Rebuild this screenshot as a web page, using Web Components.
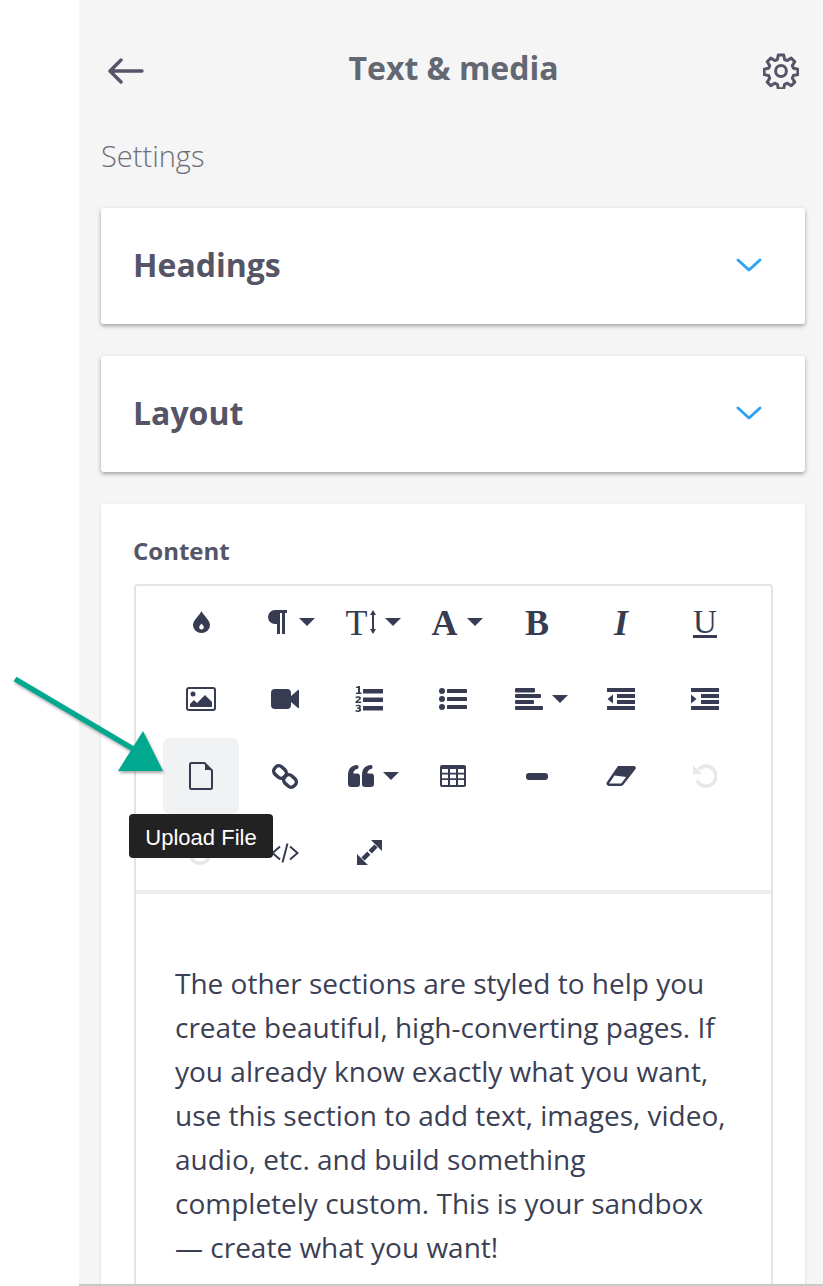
<!DOCTYPE html>
<html lang="en"><head><meta charset="utf-8"><title>Text &amp; media</title>
<style>
html,body{margin:0;padding:0;background:#fff;height:1286px;overflow:hidden}
body{font-family:"Open Sans",sans-serif}
</style></head><body>
<template id="t-panel"><style>
:host{display:flex;flex-direction:column;margin-left:79px;height:1286px;background:#f5f5f5;position:relative}
.scroll{flex:1;min-height:0;overflow:hidden;padding:0 18px 0 22px}
.foot{height:2px;background:#c9c9c9;flex:none}
</style><div class="scroll"><slot></slot></div><div class="foot"></div></template>

<template id="t-header"><style>
:host{display:flex;align-items:center;justify-content:space-between;height:48px;padding:44px 6px 0 7px;color:#636772}
h1{margin:0;font:700 32px/48px "Open Sans",sans-serif;color:#636772}
::slotted(svg){display:block}
::slotted(svg[slot=back]){margin-top:6px}
::slotted(svg[slot=gear]){margin-top:6px}
</style><slot name="back"></slot><h1><slot></slot></h1><slot name="gear"></slot></template>

<template id="t-section-label"><style>
:host{display:block;margin:46px 0 34px;font:300 29px/36px "Open Sans",sans-serif;color:#6b6e78}
</style><slot></slot></template>

<template id="t-accordion"><style>
:host{display:flex;align-items:center;justify-content:space-between;height:116px;box-sizing:border-box;padding:0 42px 3px 32px;margin-bottom:32px;background:#fff;border-radius:3px;box-shadow:0 2px 4px rgba(0,0,0,.35)}
.t{font:700 32px/40px "Open Sans",sans-serif;color:#555567}
svg{display:block}
</style><span class="t"><slot></slot></span>
<svg width="28" height="16" viewBox="0 0 28 16" fill="none" stroke="#2ea3f2" stroke-width="3" stroke-linecap="round" stroke-linejoin="round" style="margin-top:1px"><path d="M3 3l11 10L25 3"/></svg></template>

<template id="t-content-card"><style>
:host{display:block;background:#fff;border-radius:3px;box-shadow:0 1px 3px rgba(0,0,0,.12);padding:32px 32px 0 33px;height:900px;box-sizing:border-box}
.l{font:700 24px/30px "Open Sans",sans-serif;color:#555567;margin:0 0 18px -1px;display:block}
</style><span class="l"><slot name="label"></slot></span><slot></slot></template>

<template id="t-editor"><style>
:host{display:block;border:2px solid #e4e4e4;border-radius:4px;background:#fff;height:860px}
.bar{margin-top:-2px;height:306px;border-bottom:4px solid #ededed;display:grid;grid-template-columns:repeat(7,76px);grid-auto-rows:76px;column-gap:8px;row-gap:1px;padding-left:27px;align-content:start;box-sizing:content-box}
.body{padding:67px 40px 0 39px;font:400 28px/44px "Open Sans",sans-serif;color:#3b3f55}
</style><div class="bar"><slot name="tools"></slot></div><div class="body"><slot></slot></div></template>

<template id="t-tool"><style>
:host{display:flex;align-items:center;justify-content:center;position:relative;width:76px;height:76px;border-radius:7px;color:#383c52}
:host([active]){background:#f1f2f4}
:host([off]){color:#e8e8e8}
:host([drop]){padding-left:8px;box-sizing:border-box}
.w{display:flex;align-items:center;gap:9px}
.g{display:none}
:host([serif]) .g{display:block;font:700 36px/36px "Liberation Serif",serif;padding-top:2px}
.c{display:none}
:host([drop]) .c{display:block}
::slotted(svg){display:block}
</style><div class="w"><span class="g"><slot name="glyph"></slot></span><slot></slot><svg class="c" width="16" height="8" viewBox="0 0 16 8"><path fill="currentColor" d="M0 0h16L8 8z"/></svg></div><slot name="over"></slot></template>

<template id="t-tooltip"><style>
:host{display:block;position:absolute;z-index:3;left:50%;top:100%;transform:translateX(-50%);width:144px;height:44px;background:#222;border-radius:4px;color:#fff;font:400 22px/47px "Liberation Sans",sans-serif;text-align:center;white-space:nowrap}
</style><slot></slot></template>

<template id="t-arrow"><style>
:host{display:block;position:absolute;left:-79px;top:670px;width:180px;height:110px;z-index:4;pointer-events:none}
svg{display:block;overflow:visible;filter:drop-shadow(1px 2px 1.5px rgba(0,0,0,.35))}
</style><svg width="180" height="110" viewBox="0 0 180 110"><path d="M15 9L135 80" stroke="#00a88f" stroke-width="5.500" fill="none"/><path fill="#00a88f" d="M163 101L143 61 118 101z"/></svg></template>

<x-panel>
 <x-header>Text &amp; media
  <svg slot="back" width="36" height="26" viewBox="0 0 36 26" fill="none" stroke="#555567" stroke-width="3.4" stroke-linecap="round" stroke-linejoin="round"><path d="M34 13H3M13 2L2 13l11 11"/></svg>
  <svg slot="gear" width="36" height="36" viewBox="0 0 36 36" fill="none" stroke="#555567" stroke-width="3" stroke-linejoin="round"><path d="M15.300 2h5.400l.9 4.500 2.700 1.100 3.900-2.500 3.600 3.600-2.500 3.900 1.100 2.700 4.500.9v5.400l-4.500.9-1.100 2.700 2.500 3.900-3.600 3.600-3.900-2.500-2.700 1.100-.9 4.500h-5.400l-.9-4.500-2.700-1.100-3.900 2.500-3.600-3.600 2.500-3.900-1.100-2.700-4.500-.9v-5.400l4.500-.9 1.100-2.700-2.500-3.900 3.600-3.600 3.900 2.500 2.700-1.100z"/><circle cx="18" cy="18" r="5.400"/></svg>
 </x-header>
 <x-section-label>Settings</x-section-label>
 <x-accordion>Headings</x-accordion>
 <x-accordion>Layout</x-accordion>
 <x-content-card>
  <span slot="label">Content</span>
  <x-editor>
   <x-tool slot="tools"><svg width="17" height="22" viewBox="0 0 17 22"><path fill="currentColor" fill-rule="evenodd" d="M8.500 0C10 4 17 9 17 14a8.500 8 0 0 1-17 0C0 9 7 4 8.500 0zM8.500 12.500c-1 1.500-2.300 2.500-2.300 3.700a2.300 2.300 0 0 0 4.600 0c0-1.200-1.300-2.200-2.300-3.700z"/></svg></x-tool>
   <x-tool slot="tools" drop style="padding-left:12px"><svg width="20" height="24" viewBox="0 0 20 24" style="margin-right:3px"><path fill="currentColor" d="M8 0h12v3h-2v21h-3V3h-2v21h-3V14H8A7 7 0 0 1 8 0z"/></svg></x-tool>
   <x-tool slot="tools" drop serif><span slot="glyph" style="font-weight:400">T</span><svg width="6" height="24" viewBox="0 0 6 24" style="margin-left:-7px"><path fill="currentColor" d="M3 0l3 5H4v14h2l-3 5-3-5h2V5H0z"/></svg></x-tool>
   <x-tool slot="tools" drop serif><span slot="glyph">A</span></x-tool>
   <x-tool slot="tools" serif><span slot="glyph">B</span></x-tool>
   <x-tool slot="tools" serif><span slot="glyph" style="font-style:italic">I</span></x-tool>
   <x-tool slot="tools" serif><span slot="glyph" style="font:400 33px/26px 'Liberation Serif',serif;display:block;border-bottom:3px solid currentColor;width:24px;text-align:center">U</span></x-tool>

   <x-tool slot="tools"><svg width="30" height="24" viewBox="0 0 30 24"><rect x="1" y="1" width="28" height="22" rx="2" fill="none" stroke="currentColor" stroke-width="2"/><circle cx="7" cy="7" r="2.500" fill="currentColor"/><path fill="currentColor" d="M4 20v-3l4-4 3 3 8-8 7 7v5z"/></svg></x-tool>
   <x-tool slot="tools"><svg width="28" height="20" viewBox="0 0 28 20"><path fill="currentColor" d="M4 0h12a4 4 0 0 1 4 4v3l7-6q1-1 1 1v16q0 2-1 1l-7-6v3a4 4 0 0 1-4 4H4a4 4 0 0 1-4-4V4a4 4 0 0 1 4-4z"/></svg></x-tool>
   <x-tool slot="tools"><svg width="28" height="27" viewBox="0 0 28 27"><path fill="currentColor" d="M8 3h20v4.500H8zM8 11.500h20V16H8zM8 20h20v4.500H8zM1 1l2.500-1H5v6.500h1.500V8H1V6.500h2V2H1zM.5 11c1-1 5.500-1.300 5.500 1.300 0 1.500-2.500 2.300-3.200 3.200h3.400V17H.4v-1.300c.5-1.200 3.600-2.300 3.600-3.300 0-.9-2-.5-3 .1zM.8 19.300c1.500-.8 5.200-.9 5.200 1.200 0 .8-.5 1.200-1.100 1.500.8.300 1.300.8 1.300 1.700 0 2.600-4.300 2.700-6 1.500l.6-1.200c1 .6 3.400.8 3.400-.4 0-.8-1.200-.9-2.200-.8v-1.200c.9 0 2-.1 2-.9 0-1-2-.7-3.200-.2z"/></svg></x-tool>
   <x-tool slot="tools"><svg width="28" height="22" viewBox="0 0 28 22"><g fill="currentColor"><circle cx="3" cy="3" r="3"/><circle cx="3" cy="11" r="3"/><circle cx="3" cy="19" r="3"/><rect x="8" y="1" width="20" height="4" rx=".5"/><rect x="8" y="9" width="20" height="4" rx=".5"/><rect x="8" y="17" width="20" height="4" rx=".5"/></g></svg></x-tool>
   <x-tool slot="tools" drop><svg width="28" height="22" viewBox="0 0 28 22"><g fill="currentColor"><rect width="20" height="4.500" rx="1"/><rect y="6" width="26" height="4" rx="1"/><rect y="12" width="19" height="4" rx="1"/><rect y="18" width="28" height="4" rx="1"/></g></svg></x-tool>
   <x-tool slot="tools"><svg width="28" height="22" viewBox="0 0 28 22"><path fill="currentColor" d="M0 0h28v4H0zM10 6h18v4H10zM10 12h18v4H10zM0 18h28v4H0zM6 6.500v9L.5 11z"/></svg></x-tool>
   <x-tool slot="tools"><svg width="28" height="22" viewBox="0 0 28 22"><path fill="currentColor" d="M0 0h28v4H0zM10 6h18v4H10zM10 12h18v4H10zM0 18h28v4H0zM0 6.500v9L5.500 11z"/></svg></x-tool>

   <x-tool slot="tools" active><svg width="24" height="28" viewBox="0 0 24 28" fill="none" stroke="currentColor" stroke-width="2" stroke-linejoin="round"><path d="M15.500 1H2.500A1.500 1.500 0 0 0 1 2.500v23A1.500 1.500 0 0 0 2.500 27h19a1.500 1.500 0 0 0 1.500-1.500V8.500z"/><path fill="currentColor" stroke="none" d="M16 1l7 7h-7z"/></svg><x-tooltip slot="over">Upload File</x-tooltip></x-tool>
   <x-tool slot="tools"><svg width="26" height="25" viewBox="0 0 26 25" fill="none" stroke="currentColor" stroke-width="3.400"><rect x="1.500" y="3" width="13" height="10" rx="4.500" transform="rotate(42 8 8)"/><rect x="11.500" y="12" width="13" height="10" rx="4.500" transform="rotate(42 18 17)"/></svg></x-tool>
   <x-tool slot="tools" drop><svg width="26" height="22" viewBox="0 0 26 22"><path fill="currentColor" d="M3 22a3 3 0 0 1-3-3V10C0 4 3 .5 9 0c2 0 2 4 0 4C7 4.500 5.500 6 5.300 8.500H9a3 3 0 0 1 3 3V19a3 3 0 0 1-3 3zM17 22a3 3 0 0 1-3-3V10c0-6 3-9.500 9-10 2 0 2 4 0 4-2 .5-3.500 2-3.700 4.500H23a3 3 0 0 1 3 3V19a3 3 0 0 1-3 3z"/></svg></x-tool>
   <x-tool slot="tools"><svg width="26" height="22" viewBox="0 0 26 22"><path fill="currentColor" fill-rule="evenodd" d="M2 0h22a2 2 0 0 1 2 2v18a2 2 0 0 1-2 2H2a2 2 0 0 1-2-2V2a2 2 0 0 1 2-2zM2 4v3.800h6V4zM10 4v3.800h6V4zM18 4v3.800h6V4zM2 9.500v3.800h6V9.500zM10 9.500v3.800h6V9.500zM18 9.500v3.800h6V9.500zM2 15v5h6v-5zM10 15v5h6v-5zM18 15v5h6v-5z"/></svg></x-tool>
   <x-tool slot="tools"><svg width="22" height="7" viewBox="0 0 22 7"><rect width="22" height="7" rx="3" fill="currentColor"/></svg></x-tool>
   <x-tool slot="tools"><svg width="30" height="20" viewBox="0 0 30 20"><path fill="currentColor" fill-rule="evenodd" d="M12 0h16a2 2 0 0 1 1.500 3L17.500 18.500A3.500 3.500 0 0 1 15 20H3a2.500 2.500 0 0 1-2-4zM8.500 9.500L3 17.500h12.200l5-6.500z"/></svg></x-tool>
   <x-tool slot="tools" off><svg width="24" height="24" viewBox="0 0 24 24" fill="none" stroke="currentColor" stroke-width="3.600"><path d="M5.500 5.500A10 10 0 1 1 4 16.500"/><path fill="currentColor" stroke="none" d="M0 1v9h9z"/></svg></x-tool>

   <x-tool slot="tools" off><svg width="24" height="24" viewBox="0 0 24 24" fill="none" stroke="currentColor" stroke-width="3.600"><path d="M18.500 5.500A10 10 0 1 0 20 16.500"/><path fill="currentColor" stroke="none" d="M24 1v9h-9z"/></svg></x-tool>
   <x-tool slot="tools"><svg width="28" height="20" viewBox="0 0 28 20" fill="none" stroke="currentColor" stroke-width="2"><path d="M9 3.500L1.500 10 9 16.500M19 3.500l7.500 6.500-7.500 6.500M16.500 .5L11.500 19.500"/></svg></x-tool>
   <x-tool slot="tools"><svg width="25" height="25" viewBox="0 0 25 25" style="margin-top:-2px"><path fill="currentColor" d="M25 0v11L14 0zM0 25V14l11 11z"/><path stroke="currentColor" stroke-width="4.500" d="M19 6l-5.800 5.800M6 19l5.800-5.800"/></svg></x-tool>
   The other sections are styled to help you create beautiful, high-converting pages. If you already know exactly what you want, use this section to add text, images, video, audio, etc. and build something completely custom. This is your sandbox — create what you want!
  </x-editor>
 </x-content-card>
 <x-arrow></x-arrow>
</x-panel>
<script>
const reg=(n,t)=>customElements.define(n,class extends HTMLElement{constructor(){super();this.attachShadow({mode:"open"}).appendChild(document.getElementById(t).content.cloneNode(true))}});
[["x-panel","t-panel"],["x-header","t-header"],["x-section-label","t-section-label"],["x-accordion","t-accordion"],["x-content-card","t-content-card"],["x-editor","t-editor"],["x-tool","t-tool"],["x-tooltip","t-tooltip"],["x-arrow","t-arrow"]].forEach(a=>reg(a[0],a[1]));
</script>
</body></html>
